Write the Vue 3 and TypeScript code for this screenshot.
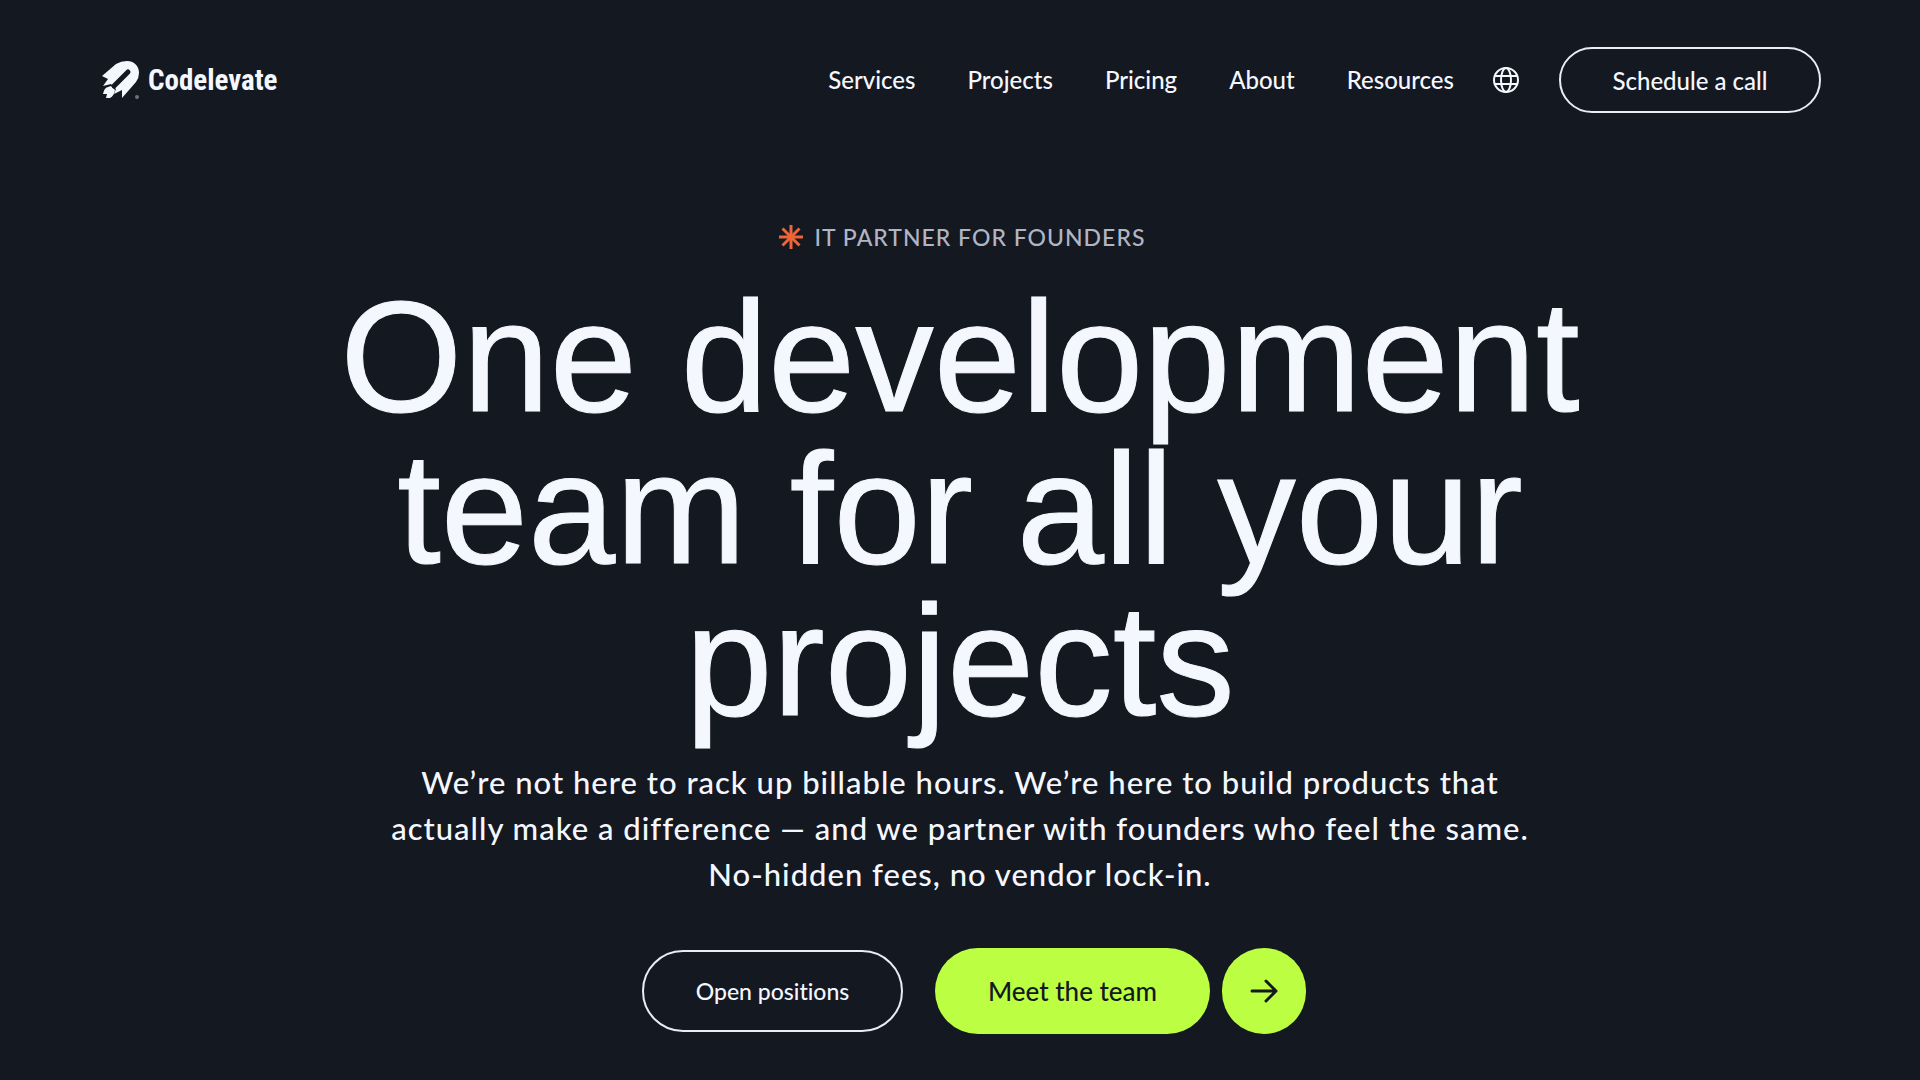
<script setup lang="ts">
const links: string[] = ['Services', 'Projects', 'Pricing', 'About', 'Resources']
const rays: number[] = [0, 45, 90, 135]
</script>

<template>
  <div class="page">
    <header class="header">
      <a class="logo" href="#" aria-label="Codelevate home">
        <svg class="logo-mark" viewBox="0 0 38 38" aria-hidden="true">
          <path fill="#f5f7ff" d="M0 15 L14 3 Q19 0 25 0 C33 0 37 6 37 12 Q37 17 34 21 L20 37 V29 L12 33 L14 28 L9 23 L1 25 L6 18 Z" />
          <path fill="#f5f7ff" d="M1 33 Q2 27 6 26 L9 25 L13 29 Q12 35 8 37 H4 L5 33 Z" />
          <path stroke="#141821" stroke-width="5" stroke-linecap="round" d="M12 25 L26 11" />
          <circle cx="35" cy="36" r="2" fill="#6d717c" />
        </svg>
        <span class="logo-text">Codelevate</span>
      </a>
      <nav class="nav" aria-label="Main">
        <a v-for="link in links" :key="link" class="nav-link" href="#">{{ link }}</a>
      </nav>
      <button class="globe" type="button" aria-label="Change language">
        <svg viewBox="0 0 28 28" fill="none" stroke="#f5f7ff" stroke-width="2" aria-hidden="true">
          <circle cx="14" cy="14" r="12" />
          <ellipse cx="14" cy="14" rx="5" ry="12" />
          <path d="M3 10H25M3 18H25" />
        </svg>
      </button>
      <button class="pill pill-outline schedule" type="button">Schedule a call</button>
    </header>

    <main class="hero">
      <p class="eyebrow">
        <svg class="star" viewBox="0 0 24 24" stroke="#ef6537" stroke-width="3" aria-hidden="true">
          <path v-for="angle in rays" :key="angle" d="M12 0V24" :transform="`rotate(${angle} 12 12)`" />
        </svg>
        IT PARTNER FOR FOUNDERS
      </p>
      <h1 class="title">One development<br />team for all your<br />projects</h1>
      <p class="lead">
        We’re not here to rack up billable hours. We’re here to build products that<br />
        actually make a difference — and we partner with founders who feel the same.<br />
        No-hidden fees, no vendor lock-in.
      </p>
      <div class="actions">
        <button class="pill pill-outline positions" type="button">Open positions</button>
        <div class="primary">
          <button class="pill team" type="button">Meet the team</button>
          <button class="pill arrow" type="button" aria-label="Go to the team">
            <svg viewBox="0 0 28 28" fill="none" stroke="#141821" stroke-width="3" stroke-linecap="round" stroke-linejoin="round" aria-hidden="true">
              <path d="M2 14H26M16 4L26 14L16 24" />
            </svg>
          </button>
        </div>
      </div>
    </main>
  </div>
</template>

<style>
body {
  margin: 0;
  background: #141821;
}
</style>

<style scoped>
.page {
  box-sizing: border-box;
  min-height: 100vh;
  background: #141821;
  color: #f5f7ff;
  font-family: Lato, "Open Sans", sans-serif;
  font-weight: 500;
  font-variant-ligatures: none;
}
.header {
  display: flex;
  align-items: center;
  padding: 47px 99px 0 102px;
}
.logo {
  display: flex;
  align-items: center;
  gap: 8px;
  margin-right: auto;
  color: inherit;
  text-decoration: none;
}
.logo-mark {
  width: 38px;
  height: 38px;
}
.logo-text {
  font-family: "Liberation Sans Narrow", "Roboto Condensed", Roboto, sans-serif;
  font-size: 29px;
  line-height: 36px;
  font-weight: 700;
}
.nav {
  display: flex;
  gap: 52px;
}
.nav-link {
  color: inherit;
  font-size: 24px;
  line-height: 32px;
  text-decoration: none;
}
.globe {
  width: 28px;
  height: 28px;
  margin: 0 39px 0 38px;
  padding: 0;
  border: 0;
  background: none;
  cursor: pointer;
}
.globe svg {
  display: block;
}
.pill {
  box-sizing: border-box;
  padding: 0;
  border: 0;
  border-radius: 43px;
  background: #bcff42;
  color: #141821;
  font-family: inherit;
  font-size: 24px;
  font-weight: 500;
  font-variant-ligatures: none;
  cursor: pointer;
}
.pill-outline {
  border: 2px solid #e9ebf5;
  background: transparent;
  color: #f5f7ff;
}
.schedule {
  width: 262px;
  height: 66px;
}
.hero {
  display: flex;
  flex-direction: column;
  align-items: center;
  padding-top: 108px;
  text-align: center;
}
.eyebrow {
  display: flex;
  align-items: center;
  gap: 12px;
  margin: 0;
  padding-left: 4px;
  color: #b1b5c3;
  font-size: 23px;
  line-height: 32px;
  letter-spacing: 1px;
}
.star {
  width: 24px;
  height: 24px;
}
.title {
  margin: 28px 0 22px;
  font-family: "Liberation Sans", Arial, sans-serif;
  font-size: 157px;
  line-height: 152px;
  font-weight: 400;
  -webkit-text-stroke: 1px #f5f7ff;
}
.lead {
  margin: 0;
  font-size: 31px;
  line-height: 46px;
  letter-spacing: 1px;
}
.actions {
  display: flex;
  align-items: center;
  gap: 32px;
  margin-top: 51px;
  padding-left: 28px;
}
.primary {
  display: flex;
  gap: 12px;
}
.positions {
  width: 261px;
  height: 82px;
  font-size: 23px;
}
.team {
  width: 275px;
  height: 86px;
  font-size: 26px;
}
.arrow {
  display: flex;
  align-items: center;
  justify-content: center;
  width: 84px;
  height: 86px;
}
.arrow svg {
  width: 28px;
  height: 28px;
}
</style>
